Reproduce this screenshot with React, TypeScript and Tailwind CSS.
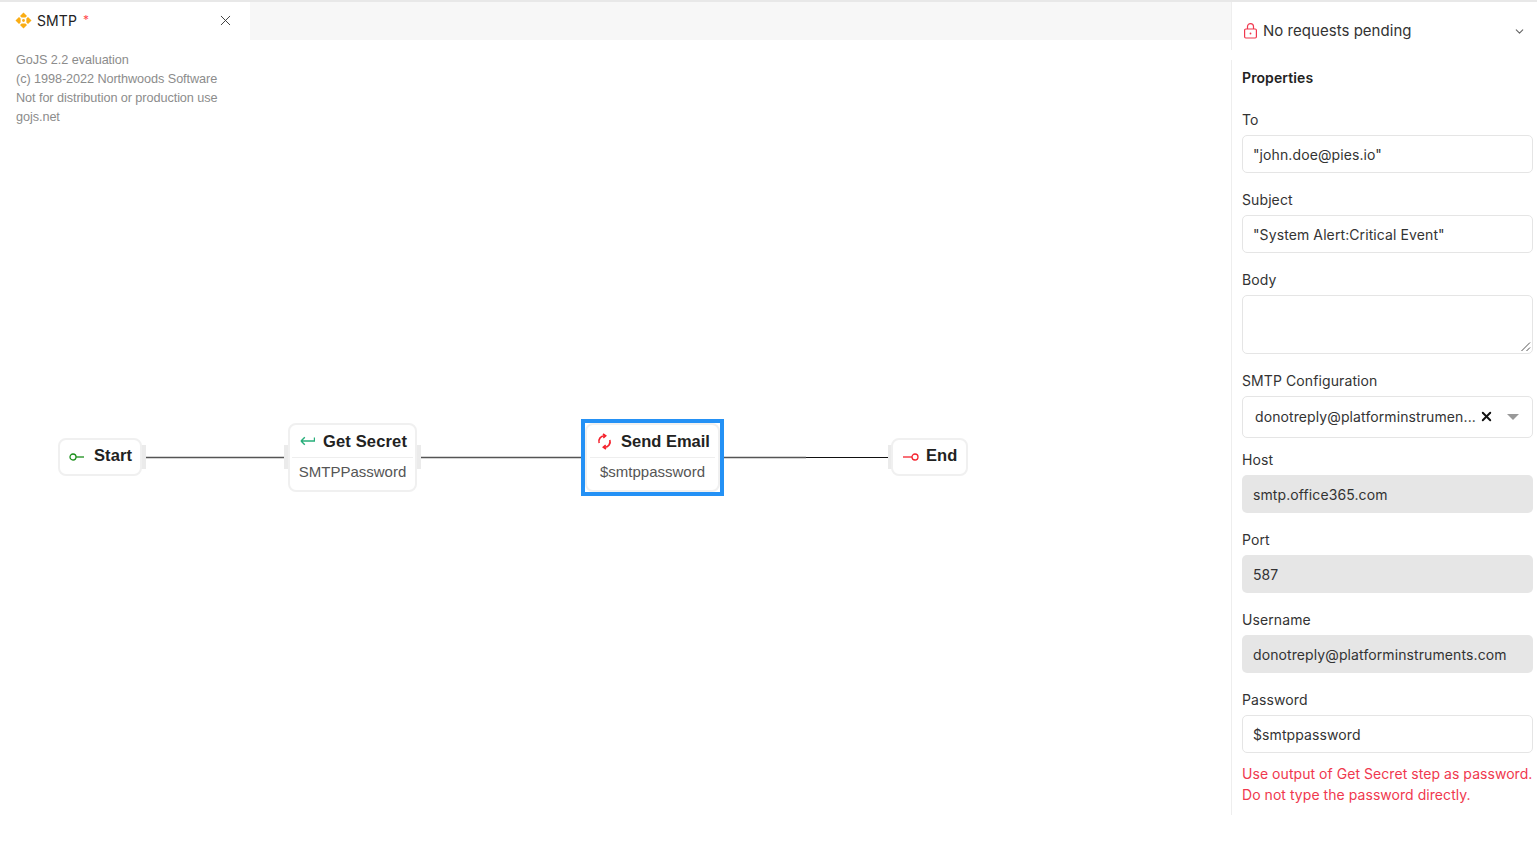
import { ChevronDown, X } from "lucide-react";

const inter = "font-['Inter','Noto_Sans',sans-serif]";
const arial = "font-['Liberation_Sans',Arial,sans-serif]";

function Field({
  label,
  value,
  disabled,
}: {
  label: string;
  value: string;
  disabled?: boolean;
}) {
  return (
    <div className="mb-[17px]">
      <div className="mb-[5px] h-[20px] text-[14px] leading-[20px] text-[#333]">{label}</div>
      <div
        className={`h-[38px] rounded-[5px] text-[14px] text-[#333] ${
          disabled
            ? "bg-[#e6e6e6] px-[11px] leading-[39px]"
            : "border border-[#e5e5e5] bg-white px-[10px] leading-[37px]"
        }`}
      >
        {value}
      </div>
    </div>
  );
}

function Port({ x, y, h }: { x: number; y: number; h: number }) {
  return (
    <div
      className="absolute w-[5px] bg-[#ebebeb]"
      style={{ left: x, top: y, height: h }}
    />
  );
}

function SmallNode({ x, w, title, icon }: { x: number; w: number; title: string; icon: React.ReactNode }) {
  return (
    <div
      className="absolute top-[438px] flex h-[38px] items-center rounded-[8px] border-2 border-[#f0f0f0] bg-white pb-[4px]"
      style={{ left: x, width: w }}
    >
      {icon}
      <span className={`${arial} text-[16.5px] leading-[18px] font-bold text-[#222]`}>{title}</span>
    </div>
  );
}

export default function App() {
  return (
    <div className={`flex h-[850px] w-[1537px] overflow-hidden border-t-2 border-[#e8e8e8] bg-white tracking-[0.1px] ${inter}`}>
      {/* diagram side */}
      <div className="relative w-[1231px] shrink-0">
        <div className="flex h-[38px] bg-[#f7f7f7]">
          <div className="flex h-[38px] w-[250px] items-center bg-white pr-[16px] pb-[2px] pl-[15px]">
            <svg width="17" height="17" viewBox="0 0 17 17" fill="#faad14">
              <path d="M8.5 0.5 12 4 10.4 5.6H6.6L5 4Z" />
              <path d="M8.5 16.5 12 13 10.4 11.4H6.6L5 13Z" />
              <path d="M0.5 8.5 4 5 5.6 6.6V10.4L4 12Z" />
              <path d="M16.5 8.5 13 5 11.4 6.6V10.4L13 12Z" />
              <circle cx="8.5" cy="8.5" r="1.4" />
            </svg>
            <span className="ml-[5px] text-[14px] text-[#222]">SMTP</span>
            <span className="ml-[6px] text-[12px] text-[#ff4d4f]">*</span>
            <X className="ml-auto text-[#333]" size={17} strokeWidth={1.3} />
          </div>
        </div>

        {/* canvas */}
        <div className={`absolute top-[49px] left-[16px] text-[12.7px] leading-[19px] tracking-[-0.08px] text-[#8c8c8c] ${arial}`}>
          <div>GoJS 2.2 evaluation</div>
          <div>(c) 1998-2022 Northwoods Software</div>
          <div>Not for distribution or production use</div>
          <div>gojs.net</div>
        </div>

        <svg className="absolute top-[-2px] left-0" width="1231" height="850">
          <path d="M145 457.5H285M421 457.5H581M723 457.5H806" stroke="#555" strokeWidth="1.3" fill="none" />
          <path d="M806 457.5H888" stroke="#111" strokeWidth="1" fill="none" />
        </svg>

        {/* offset the 2px top border of the page */}
        <div className="absolute top-[-2px] left-0">
          <Port x={141} y={445} h={24} />
          <SmallNode
            x={58}
            w={84}
            title="Start"
            icon={
              <svg className="mt-[3px] mr-[9px] ml-[9px]" width="16" height="8" viewBox="0 0 16 8" fill="none">
                <circle cx="4" cy="4" r="3" stroke="#1a8f1a" strokeWidth="1.3" />
                <path d="M7 4H15" stroke="#1a8f1a" strokeWidth="1.3" />
              </svg>
            }
          />

          <Port x={284} y={445} h={24} />
          <Port x={416} y={445} h={24} />
          <div className="absolute top-[423px] left-[288px] h-[69px] w-[129px] rounded-[8px] border-2 border-[#f0f0f0] bg-white">
            <div className="mx-[2px] flex h-[33px] items-center border-b border-[#eeeeee] pl-[8px]">
              <svg width="15" height="10" viewBox="0 0 15 10" fill="none" stroke="#27ae7a" strokeWidth="1.4">
                <path d="M14.5 1.5V5H1M1 5 4.8 1.2M1 5 4.8 8.8" />
              </svg>
              <span className={`${arial} ml-[8px] text-[16.5px] leading-[18px] font-bold tracking-[0.15px] text-[#222]`}>Get Secret</span>
            </div>
            <div className={`${arial} pt-[4px] text-center text-[15px] leading-[20px] tracking-normal text-[#555]`}>SMTPPassword</div>
          </div>

          <div className="absolute top-[419px] left-[581px] h-[77px] w-[143px] border-4 border-[#2491f5] bg-white">
            <div className="h-full rounded-[8px] border-2 border-[#f0f0f0]">
              <div className="mx-[3px] flex h-[33px] items-center border-b border-[#eeeeee] pl-[6px]">
                <svg width="17" height="17" viewBox="0 0 16 16" fill="none" stroke="#f5222d" strokeWidth="1.6">
                  <path d="M3 9.5A5.2 5.2 0 0 1 8 2.6" />
                  <path d="M6.6 1 9 2.7 6.8 4.5" />
                  <path d="M13 6.5A5.2 5.2 0 0 1 8 13.4" />
                  <path d="M9.4 15 7 13.3 9.2 11.5" />
                </svg>
                <span className={`${arial} ml-[8px] text-[16.5px] leading-[18px] font-bold tracking-normal text-[#222]`}>Send Email</span>
              </div>
              <div className={`${arial} pt-[4px] text-center text-[15px] leading-[20px] tracking-normal text-[#555]`}>$smtppassword</div>
            </div>
          </div>

          <Port x={888} y={445} h={24} />
          <SmallNode
            x={891}
            w={77}
            title="End"
            icon={
              <svg className="mt-[3px] mr-[7px] ml-[10px]" width="16" height="8" viewBox="0 0 16 8" fill="none">
                <path d="M0 4H9" stroke="#f5222d" strokeWidth="1.3" />
                <circle cx="12" cy="4" r="3" stroke="#f5222d" strokeWidth="1.3" />
              </svg>
            }
          />
        </div>
      </div>

      {/* properties side */}
      <div className="w-[306px] shrink-0">
        <div className="flex h-[48px] items-center border-l border-[#eeeeee] pt-[10px] pr-[11px] pl-[11px]">
          <svg width="15" height="16" viewBox="0 0 15 16" fill="none" stroke="#f0384e" strokeWidth="1.2">
            <rect x="1.6" y="6" width="11.8" height="9" rx="1.2" />
            <path d="M4.5 6V3.6A3 3 0 0 1 10.5 3.6V6" />
            <circle cx="7.5" cy="10.5" r="0.9" fill="#f0384e" stroke="none" />
          </svg>
          <span className="ml-[5px] text-[15px] tracking-[0.03px] text-[#333]">No requests pending</span>
          <ChevronDown size={13} className="ml-auto text-[#666]" />
        </div>
        <div className="mt-[10px] h-[755px] border-l border-[#eeeeee] pr-[4px] pl-[10px]">
          <div className="pt-[9px] pb-[23px] text-[14px] leading-[18px] font-semibold text-[#222]">Properties</div>
          <Field label="To" value={'"john.doe@pies.io"'} />
          <Field label="Subject" value={'"System Alert:Critical Event"'} />

          <div className="mb-[17px]">
            <div className="mb-[5px] h-[20px] text-[14px] leading-[20px] text-[#333]">Body</div>
            <div className="relative h-[59px] rounded-[5px] border border-[#e5e5e5] bg-white">
              <svg className="absolute right-[1px] bottom-[1px]" width="11" height="11" viewBox="0 0 11 11" stroke="#555" strokeWidth="1">
                <path d="M1.5 10 10 1.5M6.5 10 10 6.5" />
              </svg>
            </div>
          </div>

          <div className="mb-[12px]">
            <div className="mb-[5px] h-[20px] text-[14px] leading-[20px] text-[#333]">SMTP Configuration</div>
            <div className="flex h-[42px] items-center rounded-[5px] border border-[#e5e5e5] bg-white pr-[13px] pb-[1px] pl-[12px] text-[14px] text-[#333]">
              <span>donotreply@platforminstrumen...</span>
              <X size={15} strokeWidth={3} className="ml-[3px] text-[#111]" />
              <span className="ml-auto h-0 w-0 border-x-[6px] border-t-[6px] border-x-transparent border-t-[#999]" />
            </div>
          </div>

          <Field label="Host" value="smtp.office365.com" disabled />
          <Field label="Port" value="587" disabled />
          <Field label="Username" value="donotreply@platforminstruments.com" disabled />
          <div>
            <div className="mb-[5px] h-[20px] text-[14px] leading-[20px] text-[#333]">Password</div>
            <div className="h-[38px] rounded-[5px] border border-[#e5e5e5] bg-white px-[10px] text-[14px] leading-[37px] text-[#333]">
              $smtppassword
            </div>
          </div>
          <div className="mt-[10px] text-[14px] leading-[21px] tracking-[0.05px] text-[#f0384e]">
            <div>Use output of Get Secret step as password.</div>
            <div>Do not type the password directly.</div>
          </div>
        </div>
      </div>
    </div>
  );
}
